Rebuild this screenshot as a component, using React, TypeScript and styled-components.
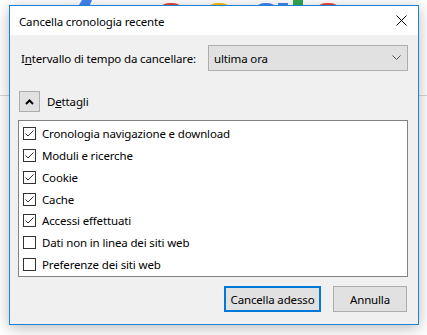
import React, { useState } from "react";
import styled, { createGlobalStyle } from "styled-components";

const GlobalStyle = createGlobalStyle`
  html, body {
    margin: 0;
    padding: 0;
    background: #ffffff;
  }
  body {
    font-family: "Segoe UI", "Noto Sans", sans-serif;
    font-size: 11.5px;
    letter-spacing: -0.15px;
    color: #000;
  }
`;

const Page = styled.div`
  position: relative;
  width: 427px;
  height: 335px;
  overflow: hidden;
  background: #ffffff;
`;

const Backdrop = styled.svg`
  position: absolute;
  left: 0;
  top: 0;
`;

const Window = styled.div`
  position: absolute;
  left: 9px;
  top: 5px;
  width: 410px;
  height: 320px;
  box-sizing: border-box;
  border: 1px solid #1883d7;
  background: #f0f0f0;
  box-shadow: 0 3px 14px rgba(0, 0, 0, 0.28);
  display: flex;
  flex-direction: column;
`;

const TitleBar = styled.div`
  height: 29px;
  background: #ffffff;
  display: flex;
  align-items: center;
  justify-content: space-between;
  padding: 0 10px 0 9px;
`;

const Title = styled.span`
  padding-top: 1px;
  white-space: nowrap;
`;

const CloseButton = styled.button`
  border: none;
  background: transparent;
  padding: 0;
  width: 14px;
  height: 14px;
  display: flex;
  align-items: center;
  justify-content: center;
  cursor: pointer;
`;

const Body = styled.div`
  flex: 1;
  display: flex;
  flex-direction: column;
  padding: 10px 10px 12px 8px;
`;

const RangeRow = styled.div`
  display: flex;
  align-items: center;
  justify-content: space-between;
  padding-left: 3px;
`;

const Label = styled.span`
  white-space: nowrap;
`;

const Key = styled.span`
  text-decoration: underline;
`;

const Select = styled.div`
  width: 200px;
  height: 26px;
  box-sizing: border-box;
  border: 1px solid #adadad;
  background: #e1e1e1;
  display: flex;
  align-items: center;
  justify-content: space-between;
  padding: 0 6px 0 5px;
`;

const DetailsRow = styled.div`
  display: flex;
  align-items: center;
  gap: 7px;
  margin-top: 20px;
  padding-left: 1px;
`;

const Toggle = styled.button`
  width: 21px;
  height: 21px;
  box-sizing: border-box;
  border: 1px solid #adadad;
  background: #e1e1e1;
  padding: 0;
  display: flex;
  align-items: center;
  justify-content: center;
`;

const ListBox = styled.div`
  margin-top: 8px;
  height: 157px;
  box-sizing: border-box;
  border: 1px solid #828282;
  background: #ffffff;
  padding: 2px 4px 1px;
  display: flex;
  flex-direction: column;
`;

const Item = styled.label`
  height: 22px;
  display: flex;
  align-items: center;
  gap: 6px;
  white-space: nowrap;
`;

const Box = styled.span`
  width: 13px;
  height: 13px;
  box-sizing: border-box;
  border: 1px solid #333333;
  background: #ffffff;
  display: flex;
  align-items: center;
  justify-content: center;
`;

const Footer = styled.div`
  margin-top: auto;
  display: flex;
  justify-content: flex-end;
  gap: 12px;
  padding-right: 1px;
`;

const Button = styled.button<{ $primary?: boolean; $w: number }>`
  width: ${(p) => p.$w}px;
  height: 26px;
  box-sizing: border-box;
  border: ${(p) => (p.$primary ? "2px solid #0078d7" : "1px solid #adadad")};
  background: #e1e1e1;
  font-family: "Segoe UI", "Noto Sans", sans-serif;
  font-size: 11.5px;
  letter-spacing: -0.15px;
  color: #000;
  padding: 0;
`;

const items = [
  { label: "Cronologia navigazione e download", checked: true },
  { label: "Moduli e ricerche", checked: true },
  { label: "Cookie", checked: true },
  { label: "Cache", checked: true },
  { label: "Accessi effettuati", checked: true },
  { label: "Dati non in linea dei siti web", checked: false },
  { label: "Preferenze dei siti web", checked: false },
];

function Check({ checked }: { checked: boolean }) {
  return (
    <Box>
      {checked && (
        <svg width="11" height="11" viewBox="0 0 11 11">
          <path d="M1.5 5.5 L4 8 L9.5 2.5" fill="none" stroke="#333" strokeWidth="1" />
        </svg>
      )}
    </Box>
  );
}

export default function App() {
  const [list, setList] = useState(items);

  const toggle = (i: number) =>
    setList((l) => l.map((it, j) => (j === i ? { ...it, checked: !it.checked } : it)));

  return (
    <Page>
      <GlobalStyle />
      <Backdrop width="427" height="335" viewBox="0 0 427 335">
        <path d="M82 0 L92 0 L90 5 L79 5 Z" fill="#4285f4" />
        <ellipse cx="171" cy="8" rx="11" ry="5" fill="#ea4335" />
        <ellipse cx="219" cy="8" rx="11" ry="5" fill="#fbbc05" />
        <ellipse cx="266" cy="8" rx="10" ry="5" fill="#4285f4" />
        <rect x="278" y="3" width="10" height="3" fill="#4285f4" />
        <rect x="293" y="0" width="10" height="6" fill="#34a853" />
        <ellipse cx="328" cy="8" rx="11" ry="5" fill="#ea4335" />
        <rect x="0" y="95" width="427" height="1" fill="#d6d6d6" />
      </Backdrop>
      <Window>
        <TitleBar>
          <Title>Cancella cronologia recente</Title>
          <CloseButton aria-label="Chiudi">
            <svg width="11" height="11" viewBox="0 0 11 11">
              <path d="M0.5 0.5 L10.5 10.5 M10.5 0.5 L0.5 10.5" stroke="#000" strokeWidth="1" />
            </svg>
          </CloseButton>
        </TitleBar>
        <Body>
          <RangeRow>
            <Label>
              I<Key>n</Key>tervallo di tempo da cancellare:
            </Label>
            <Select>
              <span>ultima ora</span>
              <svg width="9" height="6" viewBox="0 0 9 6">
                <path d="M0.5 0.5 L4.5 4.5 L8.5 0.5" fill="none" stroke="#555" strokeWidth="1" />
              </svg>
            </Select>
          </RangeRow>
          <DetailsRow>
            <Toggle aria-label="Dettagli">
              <svg width="9" height="6" viewBox="0 0 9 6">
                <path d="M1 5 L4.5 1.5 L8 5" fill="none" stroke="#000" strokeWidth="2" />
              </svg>
            </Toggle>
            <Label>
              D<Key>e</Key>ttagli
            </Label>
          </DetailsRow>
          <ListBox>
            {list.map((it, i) => (
              <Item key={it.label} onClick={() => toggle(i)}>
                <Check checked={it.checked} />
                <span>{it.label}</span>
              </Item>
            ))}
          </ListBox>
          <Footer>
            <Button $primary $w={97}>Cancella adesso</Button>
            <Button $w={74}>Annulla</Button>
          </Footer>
        </Body>
      </Window>
    </Page>
  );
}
